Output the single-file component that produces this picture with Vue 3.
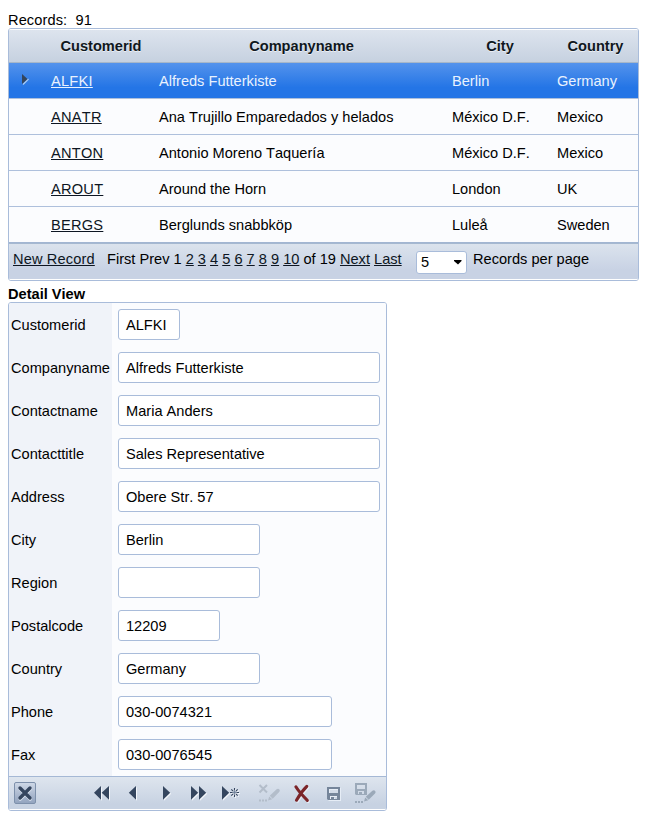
<script setup>
const headers = ['Customerid', 'Companyname', 'City', 'Country']
const rows = [
  ['ALFKI', 'Alfreds Futterkiste', 'Berlin', 'Germany'],
  ['ANATR', 'Ana Trujillo Emparedados y helados', 'México D.F.', 'Mexico'],
  ['ANTON', 'Antonio Moreno Taquería', 'México D.F.', 'Mexico'],
  ['AROUT', 'Around the Horn', 'London', 'UK'],
  ['BERGS', 'Berglunds snabbköp', 'Luleå', 'Sweden'],
]
const pages = [2, 3, 4, 5, 6, 7, 8, 9, 10]
const fields = [
  { label: 'Customerid', value: 'ALFKI', width: 62 },
  { label: 'Companyname', value: 'Alfreds Futterkiste', width: 262 },
  { label: 'Contactname', value: 'Maria Anders', width: 262 },
  { label: 'Contacttitle', value: 'Sales Representative', width: 262 },
  { label: 'Address', value: 'Obere Str. 57', width: 262 },
  { label: 'City', value: 'Berlin', width: 142 },
  { label: 'Region', value: '', width: 142 },
  { label: 'Postalcode', value: '12209', width: 102 },
  { label: 'Country', value: 'Germany', width: 142 },
  { label: 'Phone', value: '030-0074321', width: 214 },
  { label: 'Fax', value: '030-0076545', width: 214 },
]
</script>

<template>
  <main class="page">
    <div class="records">Records:&nbsp; 91</div>

    <section class="grid">
      <div class="head">
        <span></span>
        <span v-for="h in headers" :key="h">{{ h }}</span>
      </div>
      <div v-for="(r, i) in rows" :key="r[0]" class="row" :class="{ selected: i === 0 }">
        <span class="marker">
          <svg v-if="i === 0" width="8" height="12" viewBox="0 0 8 12">
            <path d="M1 11.5 6.5 6" stroke="#a9cbf5" stroke-width="1.2" />
            <path d="M0 1 5.5 6 0 11z" fill="#34455c" />
          </svg>
        </span>
        <a>{{ r[0] }}</a>
        <span>{{ r[1] }}</span>
        <span>{{ r[2] }}</span>
        <span>{{ r[3] }}</span>
      </div>
      <div class="pager">
        <span class="new"><a>New Record</a></span>
        <span class="pages">First Prev 1 <template v-for="p in pages" :key="p"><a>{{ p }}</a>{{ ' ' }}</template>of 19 <a>Next</a> <a>Last</a></span>
        <span class="select">5
          <svg width="8" height="5" viewBox="0 0 8 5"><path d="M0 0h7.5v1L4 4.5 0 1z" fill="#000" /></svg>
        </span>
        <span>Records per page</span>
      </div>
    </section>

    <h2 class="title">Detail View</h2>

    <section class="detail">
      <div class="fields">
        <div v-for="f in fields" :key="f.label" class="field">
          <label>{{ f.label }}</label>
          <div class="input" :style="{ width: f.width + 'px' }">{{ f.value }}</div>
        </div>
      </div>
      <div class="toolbar">
        <span class="close">
          <svg width="20" height="20" viewBox="0 0 20 20">
            <path d="M5.2 6 15.2 16M15.2 6 5.2 16" stroke="#dfe7f2" stroke-width="3.4" stroke-linecap="round" />
            <path d="M5 5 15 15M15 5 5 15" stroke="#35465f" stroke-width="3.4" stroke-linecap="round" />
          </svg>
        </span>
        <div class="tools">
          <svg class="nav" viewBox="0 0 24 24"><path d="M4 11.8 11 5v13.7zM11.7 11.8 19 5v13.7z" /></svg>
          <svg class="nav" viewBox="0 0 24 24"><path d="M6.8 11.8 14 5v13.7z" /></svg>
          <svg class="nav" viewBox="0 0 24 24"><path d="M9 5 16.2 11.8 9 18.7z" /></svg>
          <svg class="nav" viewBox="0 0 24 24"><path d="M5 5 12.2 11.8 5 18.7zM13 5 20.2 11.8 13 18.7z" /></svg>
          <svg class="nav" viewBox="0 0 24 24">
            <path d="M4 5 11.2 11.8 4 18.7z" />
            <circle cx="16.5" cy="11.5" r="1.4" fill="#71829b" />
            <path d="M16.5 7v2.6M16.5 13.4V16M12 11.5h2.6M18.4 11.5H21M13.3 8.3l1.8 1.8M17.9 12.9l1.8 1.8M19.7 8.3l-1.8 1.8M15.1 12.9l-1.8 1.8" stroke="#35465f" stroke-width="1.1" />
          </svg>
        </div>
        <div class="tools edit">
          <svg viewBox="0 0 24 24">
            <path d="M2.5 4 10 11.5M10 4 2.5 11.5" stroke="#b3bdca" stroke-width="2" />
            <path d="M2 18.5h2v2H2zM5 18.5h2v2H5zM8 18.5h2v2H8zM11 19.5l1.2-4 3 2.8zM12.8 14.7l6.8-6.5q1.6-1.2 2.8.2 1 1.2-.2 2.5l-6.5 6.8z" fill="#b3bdca" />
          </svg>
          <svg class="delete" viewBox="0 0 24 24">
            <path d="M6.9 5.8Q10 11 18.3 19.3M17.8 5.4Q12.5 10.5 7.5 19.2" stroke="#7b2529" stroke-width="3.1" stroke-linecap="round" />
          </svg>
          <svg class="save" viewBox="0 0 24 24">
            <path fill-rule="evenodd" d="M6 6h13v13H7l-1-1zM8 8v4h9V8zM9 15v3h7v-3z" fill="#75859a" />
            <path d="M10 16h3v2h-3z" fill="#75859a" />
          </svg>
          <svg viewBox="0 0 24 24">
            <path fill-rule="evenodd" d="M2 2h12v12H3l-1-1zM4 4v4h8V4zM5 10v3h6v-3z" fill="#9ba9b9" />
            <path d="M6 11h3v2H6zM2 20h2v2H2zM5 20h2v2H5zM8 20h2v2H8zM11 20.5l1.2-4 3 2.8zM12.8 15.7l6.6-6q1.6-1.2 2.8.2 1 1.2-.2 2.5l-6.3 6.3z" fill="#9ba9b9" />
          </svg>
        </div>
      </div>
    </section>
  </main>
</template>

<style>
body { margin: 0; background: #fff; }
</style>

<style scoped>
* { box-sizing: border-box; }
.page {
  padding: 11px 8px 0;
  font: 14.6px/17px "Liberation Sans", Arial, sans-serif;
  font-kerning: none;
  color: #000;
}
.records { height: 17px; line-height: 19px; letter-spacing: .1px; }
.grid {
  width: 631px;
  height: 253px;
  border: 1px solid #a9bcda;
  border-radius: 3px;
  background: #fbfcfe;
  overflow: hidden;
}
.head {
  display: grid;
  grid-template-columns: 34px 116px 285px 112px 79px;
  height: 34px;
  align-items: center;
  text-align: center;
  font-weight: bold;
  color: #0f1720;
  text-shadow: 0 1px 0 rgba(255, 255, 255, .6);
  background: linear-gradient(#dde4ee, #c6d1e0);
  border-top: 1px solid #fff;
  border-bottom: 1px solid #a7b7c9;
}
.row {
  display: grid;
  grid-template-columns: 42px 108px 293px 105px 81px;
  height: 36px;
  padding-top: 2px;
  align-items: center;
  border-bottom: 1px solid #aec0dc;
}
.row:nth-child(6) { border-bottom-color: #a2b6d2; }
.row.selected {
  color: #e9f2fe;
  background: linear-gradient(#5493ec, #2475e6 70%);
}
.row a { letter-spacing: .25px; }
.marker { padding-left: 13px; }
.marker svg { display: block; margin-bottom: 6px; }
a { text-decoration: underline; text-underline-offset: 1px; text-decoration-thickness: 1px; color: #0d1622; }
.selected a { color: #e9f2fe; }
.pager {
  display: flex;
  height: 37px;
  padding: 7px 0 0 4px;
  white-space: nowrap;
  border-top: 1px solid #a5b8d0;
  border-bottom: 1px solid #fff;
  background: linear-gradient(#dbe3ed, #c8d2e4 75%);
}
.new { width: 94px; letter-spacing: .15px; }
.pages { width: 309px; }
.select {
  display: flex;
  align-items: center;
  justify-content: space-between;
  width: 51px;
  height: 23px;
  margin-right: 6px;
  padding: 0 4px;
  border: 1px solid #a9bcda;
  border-radius: 3px;
  background: #fff;
}
.title { margin: 4px 0 0; height: 17px; font-size: 14.6px; line-height: 19px; }
.detail {
  width: 379px;
  height: 509px;
  border: 1px solid #a9bcda;
  border-radius: 3px;
  background: #fbfcfe;
  overflow: hidden;
}
.fields {
  height: 473px;
  background: linear-gradient(90deg, #f0f3f9 103px, #fbfcfe 103px);
}
.field { display: flex; align-items: center; height: 43px; }
.field label { width: 109px; padding: 2px 0 0 2px; }
.input {
  height: 31px;
  padding: 0 7px;
  line-height: 30px;
  border: 1px solid #a9bcda;
  border-radius: 3px;
  background: #fff;
}
.toolbar {
  display: flex;
  align-items: center;
  height: 34px;
  padding-left: 5px;
  border-top: 1px solid #a5b8d5;
  border-bottom: 1px solid #fff;
  background: linear-gradient(#dee5ee, #c7d2e2 85%);
}
.close {
  width: 22px;
  height: 22px;
  border: 1px solid #7d90ab;
  border-radius: 2px;
  background: linear-gradient(#cdd7e6, #93a4bf);
}
.close svg { display: block; }
.tools { display: flex; margin-left: 50px; }
.tools svg { width: 24px; height: 24px; margin: 0 4px; fill: none; }
.tools.edit { margin-left: 7px; }
.nav { filter: drop-shadow(1px 1px 0 #f4f7fb); }
.tools .nav { fill: #35465f; }
.delete, .save { filter: drop-shadow(1px 1px 0 #e6edf6); }
</style>
